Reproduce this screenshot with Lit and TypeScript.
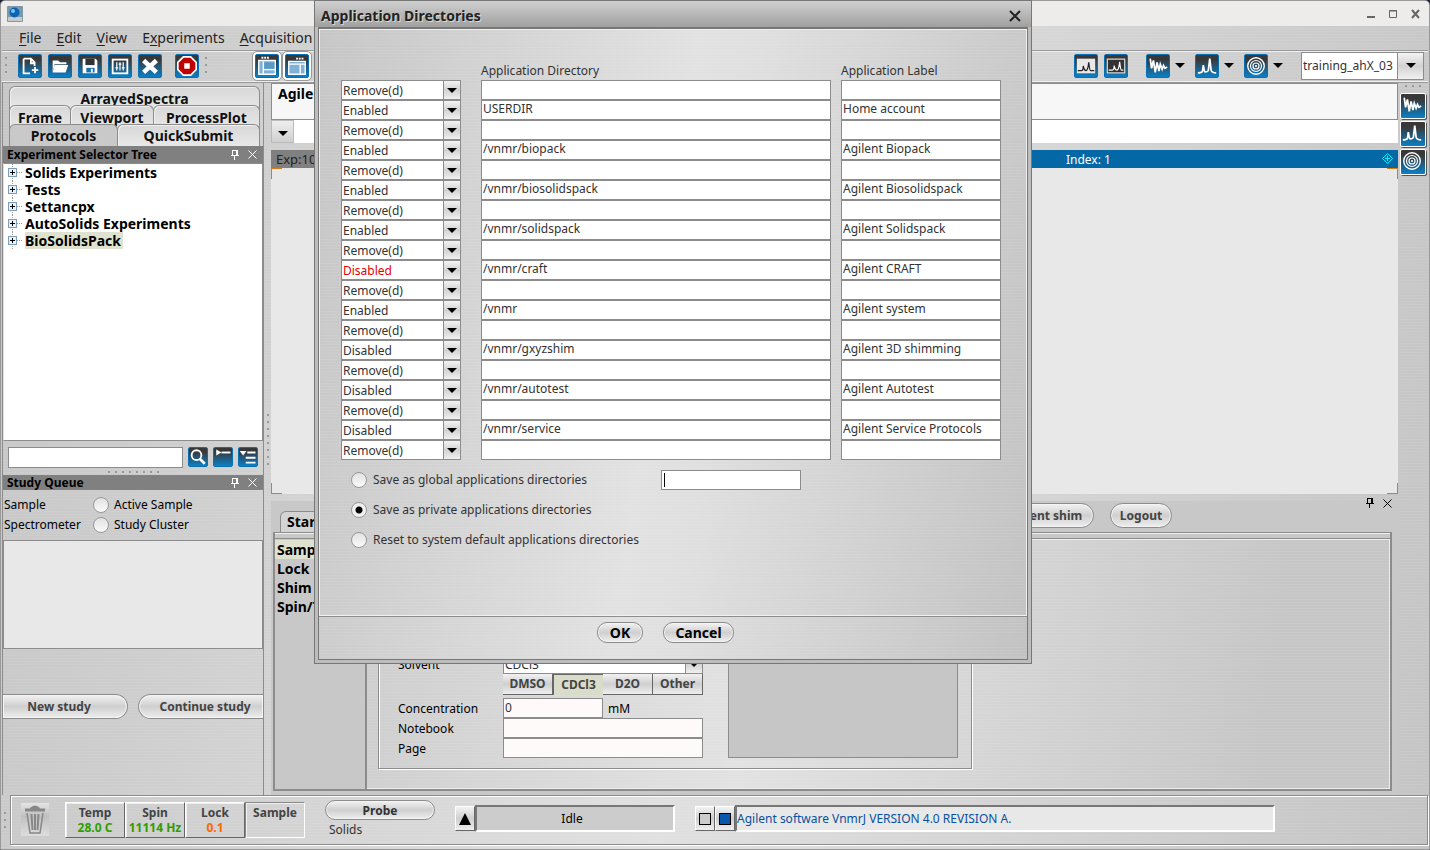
import { LitElement, html, css, svg } from "lit";
import { customElement } from "lit/decorators.js";
import { classMap } from "lit/directives/class-map.js";

const shapes: Record<string, unknown> = {
  new: svg`<path d="M5 4h8l4 4v4M5 4v16h7M13 4v5h4" fill="none" stroke="#fff" stroke-width="2"/><path d="M17.500 13v7M14 16.500h7" stroke="#fff" stroke-width="2"/>`,
  open: svg`<path d="M4 19V6h6l2 2h7v2H6z" fill="#fff"/><path d="M6 11h15l-3 8H4z" fill="#fff"/>`,
  save: svg`<path d="M4 4h14l2 2v14H4z" fill="#fff"/><rect x="7" y="4" width="10" height="7" fill="#333"/><rect x="8" y="14" width="9" height="5" fill="#1670ad"/><rect x="13" y="15" width="2" height="4" fill="#fff"/>`,
  sliders: svg`<rect x="4" y="5" width="16" height="15" fill="none" stroke="#fff" stroke-width="2"/><path d="M8.500 8v9M12 8v9M15.500 8v9M7 14h3M10.500 10h3M14 14h3" stroke="#fff" stroke-width="1.300"/>`,
  cross: svg`<path d="M5 6l14 13M19 6L5 19" stroke="#fff" stroke-width="5"/>`,
  stop: svg`<path d="M8 2h8l6 6v8l-6 6H8l-6-6V8z" fill="#c00000" stroke="#fff" stroke-width="1.800"/><rect x="9" y="9" width="6" height="6" fill="#fff"/>`,
  frameLeft: svg`<path d="M3 6h18v15H3z" fill="#7fb2d6" stroke="#fff" stroke-width="1.500"/><path d="M8 7v14M8 16h13" stroke="#fff" stroke-width="1.500"/><rect x="9" y="8" width="11" height="7" fill="#5b9ac6"/><path d="M6 3h2M9 3h2M12 3h2" stroke="#fff" stroke-width="2"/>`,
  frameRight: svg`<path d="M3 7h18v14H3z" fill="#7fb2d6" stroke="#fff" stroke-width="1.500"/><path d="M15.500 10v11M3 10h18" stroke="#fff" stroke-width="1.500"/><path d="M11 4h2M14 4h2M17 4h2" stroke="#fff" stroke-width="2"/>`,
  plotLight: svg`<rect x="2" y="4" width="20" height="16" fill="#e8e8e8"/><path d="M3 17h4q2 0 2-5q1 5 3 5q2 0 3-9q1 9 2 9h4" fill="none" stroke="#222" stroke-width="1.400"/>`,
  plotDark: svg`<rect x="2.500" y="4.500" width="19" height="15" fill="#333" stroke="#ddd" stroke-width="1.300"/><path d="M4 16.500h4q2 0 2-5q1 5 3 5q2 0 3-9q1 9 2 9h2" fill="none" stroke="#fff" stroke-width="1.300"/>`,
  fid: svg`<path d="M3.500 4l1.500 10.500L7 6l2 13L11 8l2 9.500L14.500 10l2 5.500 1.500-4 1.500 3 2.500-1.500" fill="none" stroke="#fff" stroke-width="1.900"/>`,
  peaks: svg`<path d="M2 19.500q4 0 5-1.500l1-7q1 7 2 7.500q3 0 3.500-2L15 4l1.500 12.500q.5 3 5.500 3" fill="none" stroke="#fff" stroke-width="1.900"/>`,
  target: svg`<circle cx="12" cy="12" r="9" fill="none" stroke="#fff" stroke-width="1.500"/><circle cx="12" cy="12" r="6" fill="none" stroke="#fff" stroke-width="1.300"/><circle cx="12" cy="12" r="3.300" fill="none" stroke="#fff" stroke-width="1.300"/><circle cx="12" cy="12" r="1.200" fill="#fff"/>`,
  search: svg`<circle cx="10" cy="9.500" r="6.500" fill="none" stroke="#fff" stroke-width="2.500"/><path d="M14 14l7 7" stroke="#fff" stroke-width="3.500"/>`,
  collapse: svg`<path d="M3 2l7 4-7 4z" fill="#fff"/><path d="M10 6h12" stroke="#fff" stroke-width="2.500"/>`,
  expand: svg`<path d="M1 4h9l-4.500 6z" fill="#fff"/><path d="M11 6h11M9 13h13M9 19.500h13" stroke="#fff" stroke-width="2.500"/>`,
};
const icon = (name: string) => html`<svg class="glyph" viewBox="0 0 24 24" aria-hidden="true">${shapes[name]}</svg>`;
const tool = (name: string, extra = "") => html`<button class="tool ${extra}" aria-label=${name}>${icon(name)}</button>`;
const arrow = html`<svg class="arrow" width="10" height="5" viewBox="0 0 10 5" aria-hidden="true"><path d="M0 0h10L5 5z" /></svg>`;
const pinAndClose = html`<span class="pins">
  <svg width="10" height="10" viewBox="0 0 10 10" shape-rendering="crispEdges" aria-hidden="true"><path d="M2 .5h6M2.500 0v5M7 0v5M6 0v5M1 5.500h8M4.500 6v4" fill="none" stroke="currentColor" /></svg>
  <svg width="9" height="9" viewBox="0 0 9 9" aria-hidden="true"><path d="M.5 .5l8 8M8.500 .5l-8 8" stroke="currentColor" /></svg>
</span>`;

const entries: [string, string, string][] = [
  ["Enabled", "USERDIR", "Home account"],
  ["Enabled", "/vnmr/biopack", "Agilent Biopack"],
  ["Enabled", "/vnmr/biosolidspack", "Agilent Biosolidspack"],
  ["Enabled", "/vnmr/solidspack", "Agilent Solidspack"],
  ["Disabled", "/vnmr/craft", "Agilent CRAFT"],
  ["Enabled", "/vnmr", "Agilent system"],
  ["Disabled", "/vnmr/gxyzshim", "Agilent 3D shimming"],
  ["Disabled", "/vnmr/autotest", "Agilent Autotest"],
  ["Disabled", "/vnmr/service", "Agilent Service Protocols"],
];
const blank: [string, string, string] = ["Remove(d)", "", ""];
const rows = [blank, ...entries.flatMap((e) => [e, blank])];

const base = css`
  * { box-sizing: border-box; }
  button, input, select { font: inherit; color: inherit; margin: 0; border-radius: 0; }
  button { padding: 0; }
  input[type="text"] { border: 1px solid #8c8c8c; background: #fff; padding: 0 1px; height: 20px; min-width: 0; outline: none; }
  input[type="radio"] { appearance: none; width: 16px; height: 16px; flex: none; border: 1px solid #999; border-radius: 50%; background: linear-gradient(#e2e2e2, #fafafa); }
  input[type="radio"]:checked { background: radial-gradient(circle, #000 3px, #f0f0f0 4px); }
  .combo { display: grid; grid-template: 100% / 1fr 18px; height: 20px; background: #fff; }
  .combo select { appearance: none; grid-area: 1 / 1 / 2 / 3; height: 100%; border: 1px solid #8c8c8c; background: transparent; padding: 0 1px; outline: none; min-width: 0; }
  .drop { grid-area: 1 / 2; display: grid; place-items: center; border: 1px solid #8c8c8c; background: linear-gradient(#f4f4f4, #d2d2d2 50%, #f0f0f0); pointer-events: none; }
  .pill { border: 1px solid #8c8c8c; outline: none; border-radius: 13px; background: linear-gradient(#f2f2f2, #cfcfcf 50%, #eee); box-shadow: inset 0 0 0 1px #f4f4f4; font-weight: 700; color: #333; white-space: nowrap; }
`;

@customElement("app-directories")
export class AppDirectories extends LitElement {
  static styles = [base, css`
    :host { display: flex; flex-direction: column; border: 1px solid #777; background: #bdbdbd; padding: 0 3px 3px; color: #333; }
    .title { display: flex; align-items: center; justify-content: space-between; height: 26px; margin: 0 -3px; padding: 3px 10px 0 6px; background: linear-gradient(#d0d0d0, #a0a0a0); color: #222; font: 700 14px/23px "Noto Sans", sans-serif; text-shadow: 1px 1px #d8d8d8; }
    .title button { border: 0; background: none; width: 12px; height: 12px; display: grid; }
    .pane { flex: 1; border: 1px solid #777; border-top-width: 2px; display: flex; flex-direction: column; background: repeating-linear-gradient(#fff1 0 1px, #0000 1px 3px), linear-gradient(98deg, #c6c6c6, #e2e2e2 48%, #dfdfdf 56%, #c2c2c2); }
    .body { flex: 1; border: 1px solid #f0f0f0; box-shadow: 0 1px #8c8c8c; padding: 30px 24px 0 21px; }
    .grid { display: grid; grid-template-columns: 120px 350px 160px; column-gap: 20px; }
    .line { display: contents; }
    .lines input:last-child, .label { margin-left: -10px; width: 160px; }
    .head span { line-height: 22px; height: 20px; }
    .lines input { padding-bottom: 2px; }
    .red select { color: #e60000; }
    .saves { display: grid; grid-template-columns: 320px 140px; row-gap: 10px; padding-top: 10px; }
    .saves label { display: flex; align-items: center; gap: 6px; height: 20px; padding-left: 10px; white-space: nowrap; grid-column: 1; }
    .name { display: grid; }
    .name input { padding-left: 3px; grid-area: 1 / 1; }
    .caret { grid-area: 1 / 1; width: 1px; height: 14px; margin: 3px 0 0 3px; background: #000; }
    .foot { display: flex; justify-content: center; gap: 20px; padding: 6px 15px 16px 0; }
    .foot .pill { height: 21px; font-size: 14px; line-height: 18px; color: #000; border-radius: 10px; width: 46px; }
    .foot .wide { width: 71px; }
  `];

  render() {
    return html`
      <div class="title"><span>Application Directories</span>
        <button aria-label="Close"><svg width="12" height="12" viewBox="0 0 12 12"><path d="M1 1l10 10M11 1L1 11" stroke="#222" stroke-width="2" /></svg></button></div>
      <div class="pane">
        <div class="body">
          <div class="grid head"><span></span><span>Application Directory</span><span class="label">Application Label</span></div>
          <div class="grid lines">
            ${rows.map(([state, dir, label], i) => html`<div class="line">
              <div class="combo ${classMap({ red: dir === "/vnmr/craft" })}">
                <select aria-label="State ${i + 1}"><option>${state}</option></select><span class="drop">${arrow}</span>
              </div>
              <input type="text" aria-label="Directory ${i + 1}" .value=${dir} />
              <input type="text" aria-label="Label ${i + 1}" .value=${label} />
            </div>`)}
          </div>
          <div class="saves">
            <label><input type="radio" name="save" />Save as global applications directories</label>
            <span class="name"><input type="text" aria-label="Name" /><i class="caret"></i></span>
            <label><input type="radio" name="save" checked />Save as private applications directories</label>
            <label><input type="radio" name="save" />Reset to system default applications directories</label>
          </div>
        </div>
        <div class="foot"><button class="pill">OK</button><button class="pill wide">Cancel</button></div>
      </div>`;
  }
}

@customElement("app-root")
export class AppRoot extends LitElement {
  static styles = [base, css`
    :host { display: block; position: relative; font: 12px/20px "Noto Sans", sans-serif; color: #000; background: #223; }
    .win { display: grid; grid-template-rows: 25px 24px 33px 1fr 50px; min-height: 100vh; border: 1px solid #999; border-radius: 5px 5px 0 0; padding: 0 1px 4px 1px; overflow: hidden; background: repeating-linear-gradient(#fff1 0 1px, #0000 1px 3px), linear-gradient(98deg, #c6c6c6, #e0e0e0 50%, #c4c4c4); }
    .caption { display: flex; align-items: center; justify-content: space-between; margin: 0 -1px; padding: 0 9px 0 6px; background: #edeceb; }
    .menu { display: flex; align-items: center; gap: 15px; padding-left: 17px; font-size: 14px; color: #222; }
    .menu u { text-underline-offset: 2px; }
    .tools { display: flex; align-items: center; border-top: 1px solid #999; border-bottom: 1px solid #999; box-shadow: inset 0 1px #eee, inset 0 -1px #eee; padding: 0 4px 2px 3px; gap: 6px; }
    .tool { display: grid; width: 24px; height: 24px; flex: none; border: 1px solid #0a70b4; border-radius: 2px; background: linear-gradient(#383838 20%, #0a80c8); }
    .tool .glyph { width: 22px; height: 22px; }
    .small { width: 20px; height: 20px; }
    .small .glyph { width: 18px; height: 18px; }
    .framed { outline: 1px solid #999; box-shadow: 0 0 0 2px #fff; outline-offset: 2px; }
    .grip { width: 3px; height: 17px; background: linear-gradient(#999 2px, #0000 2px) 0 0 / 2px 7px repeat-y; flex: none; }
    .tools .grip { margin: 0 4px 0 0; }
    .menuTool { display: flex; align-items: center; gap: 5px; padding-right: 4px; }
    .user { width: 123px; height: 28px; grid-template: 100% / 1fr 27px; color: #333; margin-left: 8px; }
    .gapA { margin-left: 7px; } .gapB { margin-left: 6px; } .gapC { margin-left: 31px; } .spring { flex: 1; }

    .work { display: grid; grid-template-columns: 262px minmax(0, 1fr) 30px; min-height: 0; }
    .side { display: flex; flex-direction: column; border-right: 1px solid #8c8c8c; border-left: 1px solid #8c8c8c; }
    .tabs { padding: 3px 4px 0 6px; font: 700 14px/24px "Noto Sans", sans-serif; }
    .tabrow { display: flex; height: 19px; }
    .tabrow.last { height: 22px; }
    .tab { flex: 1 1 auto; height: 24px; border: 1px solid #8c8c8c; border-bottom: 0; border-radius: 6px 6px 0 0; background: linear-gradient(#d8d8d8, #e8e8e8); box-shadow: inset 1px 1px #f0f0f0; color: #111; text-align: center; line-height: 21px; margin-right: -1px; }
    .last .tab { height: 22px; line-height: 20px; }
    .w61 { flex: 0 0 62px; } .w83 { flex: 0 0 84px; }
    .last .w108 { flex: 0 0 109px; background: #c9c9c9; line-height: 18px; box-shadow: none; }
    .bar { display: flex; justify-content: space-between; align-items: center; height: 17px; background: #808080; font-weight: 700; padding: 0 6px 0 4px; }
    .bar.thin { height: 15px; }
    .bar .pins { color: #fff; }
    .pins { display: flex; gap: 8px; align-items: center; }
    .tree { flex: 1; margin: 0; padding: 0 0 0 4px; list-style: none; background: #fff; border: 1px solid #8c8c8c; border-left-color: #ddd; font: 700 14px/17px "Noto Sans", sans-serif; }
    .tree li { display: flex; align-items: center; height: 17px; gap: 2px; }
    .tree span { padding-right: 2px; height: 17px; }
    .tree .sel { background: #dfe2cf; }
    .find { display: flex; gap: 5px; padding: 6px 5px 0 5px; height: 27px; }
    .find input { flex: 1; height: 21px; }
    .dots { height: 2px; width: 51px; margin: 3px auto 2px; background: linear-gradient(90deg, #999 2px, #0000 2px) 0 0 / 7px 2px; }
    .queue { display: grid; grid-template-columns: 89px 1fr; padding: 5px 0 5px 1px; }
    .queue label { display: flex; gap: 5px; align-items: center; height: 20px; }
    .queueBox { height: 109px; border: 1px solid #8c8c8c; background: #e8e8e8; }
    .studies { display: flex; justify-content: space-between; height: 146px; padding-top: 45px; overflow: hidden; }
    .studies .pill { height: 25px; width: 125px; line-height: 22px; color: #444; border-radius: 0 13px 13px 0; border-left: 0; padding-right: 12px; }
    .studies .pill + .pill { border-radius: 13px 0 0 13px; border-left: 1px solid #8c8c8c; border-right: 0; padding: 0 0 0 8px; }

    .main { display: grid; grid-template-columns: 7px minmax(0, 1fr); min-width: 0; }
    .split { display: grid; align-items: center; padding-left: 3px; }
    .split i { width: 2px; height: 51px; background: linear-gradient(#999 2px, #0000 2px) 0 0 / 2px 7px; }
    .center { display: flex; flex-direction: column; min-width: 0; }
    .info { height: 37px; border: 1px solid #8c8c8c; background: #f7f7f7; font: 700 14px/20px "Noto Sans", sans-serif; padding-left: 6px; }
    .command { height: 23px; background: #fff; display: flex; }
    .command button { width: 23px; border: 1px solid #bbb; background: linear-gradient(#eee, #d0d0d0); }
    .expbar { display: grid; grid-template-columns: 33% 1fr auto; height: 18px; margin-top: 7px; background: #0568a6; color: #fff; line-height: 19px; }
    .expbar span:first-child { background: #808080; color: #222; padding-left: 5px; font-size: 13px; }
    .expbar .index { padding-left: 423px; }
    .expbar svg { margin: 3px 5px 0; }
    .canvas { flex: 1; display: flex; flex-direction: column; justify-content: space-between; background: #e8e8e8; }
    .canvas div { display: flex; justify-content: space-between; }
    .canvas i { width: 11px; height: 11px; border: 0 solid #d97c10; }
    .canvas .tl { border-width: 1px 0 0 1px; } .canvas .tr { border-width: 1px 1px 0 0; }
    .canvas .bl { border-width: 0 0 1px 1px; } .canvas .br { border-width: 0 1px 1px 0; }
    .panel { height: 294px; margin-top: 7px; background: #c8c8c8; padding: 2px 6px 4px 2px; display: flex; flex-direction: column; }
    .panelTop { display: grid; grid-template-columns: 7px 60px 1fr auto auto; height: 29px; }
    .start { margin-top: 8px; height: 22px; border: 1px solid #8c8c8c; border-bottom: 0; border-radius: 6px 0 0 0; background: #d4d4d4; font: 700 14px/20px "Noto Sans", sans-serif; padding-left: 6px; }
    .acts { display: flex; gap: 16px; grid-column: 4; padding-right: 193px; }
    .acts .pill { height: 25px; width: 62px; line-height: 22px; color: #444; }
    .acts .pill:first-child { width: 102px; }
    .panelTop .pins { grid-column: 5; height: 0; }
    .framebox { flex: 1; display: grid; grid-template-columns: 92px minmax(0, 1fr); border: 1px solid #8c8c8c; border-width: 1px 2px 2px 2px; padding-top: 5px; min-height: 0; box-shadow: inset 0 1px #f0f0f0; }
    .pages { margin: 0; padding: 1px 0 0; list-style: none; border: 1px solid #8c8c8c; border-width: 1px 2px 0 0; font: 700 14px/19px "Noto Sans", sans-serif; }
    .pages li { padding-left: 2px; }
    .pages .sel { background: #dfe2cf; }
    .content { display: flex; padding: 0 0 20px 11px; border-top: 1px solid #8c8c8c; box-shadow: inset 0 1px #eee, inset -1px -1px #eee; background: repeating-linear-gradient(#fff1 0 1px, #0000 1px 3px), linear-gradient(98deg, #cecece, #e2e2e2 38%, #c6c6c6 88%); min-height: 0; }
    .group { width: 594px; flex: none; margin-top: 8px; border: 1px solid #8c8c8c; box-shadow: 1px 1px #fff, inset 1px 1px #fff; padding: 0 13px 10px 19px; display: flex; justify-content: space-between; align-items: flex-end; }
    .form { display: grid; grid-template-columns: 105px 200px; grid-auto-rows: 20px; }
    .form label, .conc span { line-height: 22px; }
    .form .combo { background: #fff; color: #333; }
    .form input { background: #fffafa; color: #333; }
    .form .solv { grid-column: 2; display: grid; grid-template-columns: repeat(4, 50px); height: 20px; }
    .form .after { margin-top: 4px; }
    .solv button { border: 1px solid #666; border-width: 0 1px 1px 0; background: linear-gradient(#f2f2f2, #cfcfcf 50%, #eee); font-weight: 700; color: #444; }
    .solv .on { background: #d9dcc8; border-width: 1px 0 0 1px; }
    .conc { display: grid; grid-template-columns: 100px 1fr; gap: 5px; }
    .form { grid-template-rows: 20px 24px; }
    .blank { width: 230px; height: 190px; border: 1px solid #8c8c8c; background: #c6c6c6; }
    .rail { padding: 2px 1px 0; display: flex; flex-direction: column; align-items: center; }
    .rail .dots { width: 16px; margin: 0 auto 5px; }
    .rail .tool { margin: 1px; width: 26px; height: 26px; border: 1px solid #fff; box-shadow: 1px 1px #555; }

    .status { display: grid; grid-template-columns: 8px 1fr; }
    .status > .grip { margin: 17px 0 0 2px; }
    .statusBox { border: 1px solid #8c8c8c; box-shadow: inset 1px 1px #fff, 1px 1px #fff; display: flex; align-items: flex-start; padding: 6px 0 0 10px; }
    .trash { width: 28px; height: 33px; background: linear-gradient(#e4e4e4, #c0c0c0 40%, #ddd); margin: 1px 16px 0 0; }
    .cells { display: grid; grid-template-columns: repeat(4, 60px); height: 36px; }
    .cell { border: 1px solid #666; border-left-color: #fff; border-top-color: #fff; background: none; font-weight: 700; color: #444; line-height: 15px; overflow: hidden; padding-top: 2px; display: flex; flex-direction: column; align-items: center; white-space: nowrap; box-shadow: inset 1px 1px #fffa; }
    .cell.in { border-color: #888 #fff #fff #888; }
    .green { color: #2f9e00; } .orange { color: #f60; }
    .probe { width: 110px; margin: -2px 20px 0 20px; display: flex; flex-direction: column; color: #333; }
    .probe .pill { height: 20px; line-height: 17px; }
    .probe span { padding-left: 4px; }
    .sq { width: 20px; height: 25px; margin-top: 4px; border: 1px solid #666; border-color: #fff #666 #666 #fff; background: linear-gradient(#f2f2f2, #cfcfcf 50%, #eee); display: grid; place-items: center; }
    .well { height: 27px; margin-top: 3px; border: 2px solid #fff; border-color: #777 #fff #fff #777; background: #ccc; line-height: 24px; }
    .idle { width: 200px; margin-right: 20px; text-align: center; padding-right: 6px; }
    .msg { width: 540px; background: #e8e8e8; color: #0a50a0; }

    app-directories { position: absolute; left: 314px; top: 0; width: 718px; height: 664px; }
  `];

  render() {
    return html`
      <div class="win">
        <div class="caption">
          <svg width="16" height="16" viewBox="0 0 16 16"><rect width="16" height="16" rx="1" fill="#7d99a8" /><rect x="1" y="11" width="14" height="4" fill="#c4ccd0" /><circle cx="7.500" cy="6.500" r="5" fill="#0a63b4" /><circle cx="6" cy="5" r="2" fill="#7cc6f4" /></svg>
          <svg width="54" height="10" viewBox="0 0 54 10"><path d="M1 8h8" stroke="#666" stroke-width="2" /><path d="M23.500 1.500h7v7h-7zM23 2h8" fill="none" stroke="#666" /><path d="M46 1l7 8M53 1l-7 8" stroke="#666" stroke-width="2" /></svg>
        </div>
        <nav class="menu"><span><u>F</u>ile</span><span><u>E</u>dit</span><span><u>V</u>iew</span><span>E<u>x</u>periments</span><span><u>A</u>cquisition</span></nav>
        <div class="tools">
          <i class="grip"></i>
          ${["new", "open", "save", "sliders", "cross"].map((n) => tool(n))}
          ${tool("stop", "gapA")}<i class="grip"></i><span class="gapC"></span>
          ${tool("frameLeft", "framed")}${tool("frameRight", "framed")}
          <span class="spring"></span>
          ${tool("plotLight")}${tool("plotDark")}<span class="gapB"></span>
          ${["fid", "peaks", "target"].map((n) => html`<span class="menuTool">${tool(n)}${arrow}</span>`)}
          <div class="combo user"><select aria-label="Workspace"><option>training_ahX_03</option></select><span class="drop">${arrow}</span></div>
        </div>
        <div class="work">
          <aside class="side">
            <div class="tabs">
              <div class="tabrow"><button class="tab">ArrayedSpectra</button></div>
              <div class="tabrow"><button class="tab w61">Frame</button><button class="tab w83">Viewport</button><button class="tab">ProcessPlot</button></div>
              <div class="tabrow last"><button class="tab w108">Protocols</button><button class="tab">QuickSubmit</button></div>
            </div>
            <div class="bar">Experiment Selector Tree${pinAndClose}</div>
            <ul class="tree">
              ${["Solids Experiments", "Tests", "Settancpx", "AutoSolids Experiments", "BioSolidsPack"].map((t, i) => html`<li>
                <svg width="15" height="17" viewBox="0 0 15 17" shape-rendering="crispEdges"><path d="M4.500 0v17M9 8.500h6" stroke="#999" stroke-dasharray="1 1" /><rect x=".5" y="4.500" width="8" height="8" fill="#e8f0f8" stroke="#7d9cb8" /><path d="M2 8.500h5M4.500 6v5" stroke="#000" /></svg>
                <span class=${classMap({ sel: i === 4 })}>${t}</span></li>`)}
            </ul>
            <div class="find"><input type="text" aria-label="Search" />${tool("search", "small")}${tool("collapse", "small")}${tool("expand", "small")}</div>
            <i class="dots"></i>
            <div class="bar thin">Study Queue${pinAndClose}</div>
            <div class="queue"><span>Sample</span><label><input type="radio" name="q" />Active Sample</label>
              <span>Spectrometer</span><label><input type="radio" name="q" />Study Cluster</label></div>
            <div class="queueBox"></div>
            <div class="studies"><button class="pill">New study</button><button class="pill">Continue study</button></div>
          </aside>
          <div class="main">
            <div class="split"><i></i></div>
            <div class="center">
              <div class="info">Agilent</div>
              <div class="command"><button aria-label="History">${arrow}</button></div>
              <div class="expbar"><span>Exp:10</span><span class="index">Index: 1</span>
                <svg width="11" height="11" viewBox="0 0 11 11"><path d="M5.500 .5l5 5-5 5-5-5zM3 5.500h5M5.500 3v5" fill="none" stroke="#00f0ff" /></svg></div>
              <div class="canvas"><div><i class="tl"></i><i class="tr"></i></div><div><i class="bl"></i><i class="br"></i></div></div>
              <div class="panel">
                <div class="panelTop"><span></span><div class="start">Start</div>
                  <div class="acts"><button class="pill">Current shim</button><button class="pill">Logout</button></div>${pinAndClose}</div>
                <div class="framebox">
                  <ul class="pages"><li class="sel">Sample</li><li>Lock</li><li>Shim</li><li>Spin/Temp</li></ul>
                  <div class="content"><div class="group">
                    <div class="form">
                      <label for="solvent">Solvent</label><div class="combo"><select id="solvent"><option>CDCl3</option></select><span class="drop">${arrow}</span></div>
                      <div class="solv"><button>DMSO</button><button class="on">CDCl3</button><button>D2O</button><button>Other</button></div>
                      <label for="conc">Concentration</label><div class="conc"><input id="conc" type="text" .value=${"0"} /><span>mM</span></div>
                      <label for="book">Notebook</label><input id="book" type="text" />
                      <label for="page">Page</label><input id="page" type="text" />
                    </div>
                    <div class="blank"></div>
                  </div></div>
                </div>
              </div>
            </div>
          </div>
          <div class="rail"><i class="dots"></i>${tool("fid")}${tool("peaks")}${tool("target")}</div>
        </div>
        <footer class="status">
          <i class="grip"></i>
          <div class="statusBox">
            <svg class="trash" viewBox="0 0 28 33"><path d="M4 7h20M10 6q4-4 8 0" fill="none" stroke="#888" stroke-width="3" /><path d="M6 10l3 20h10l3-20" fill="none" stroke="#888" stroke-width="1.500" /><path d="M10.500 11l1 16M14 11v16M17.500 11l-1 16" stroke="#888" stroke-width="2" /></svg>
            <div class="cells">
              <button class="cell">Temp<span class="green">28.0 C</span></button><button class="cell">Spin<span class="green">11114 Hz</span></button>
              <button class="cell">Lock<span class="orange">0.1</span></button><button class="cell in">Sample</button>
            </div>
            <div class="probe"><button class="pill">Probe</button><span>Solids</span></div>
            <button class="sq" aria-label="Raise"><svg width="12" height="12" viewBox="0 0 12 12"><path d="M6 0l6 12H0z" /></svg></button>
            <div class="well idle">Idle</div>
            <button class="sq" aria-label="Gray"><svg width="12" height="12"><rect x=".5" y=".5" width="11" height="11" fill="#ccc" stroke="#000" /></svg></button>
            <button class="sq" aria-label="Blue"><svg width="12" height="12"><rect x=".5" y=".5" width="11" height="11" fill="#0a58ac" stroke="#000" /></svg></button>
            <div class="well msg">Agilent software VnmrJ VERSION 4.0 REVISION A.</div>
          </div>
        </footer>
      </div>
      <app-directories role="dialog" aria-label="Application Directories"></app-directories>`;
  }
}
